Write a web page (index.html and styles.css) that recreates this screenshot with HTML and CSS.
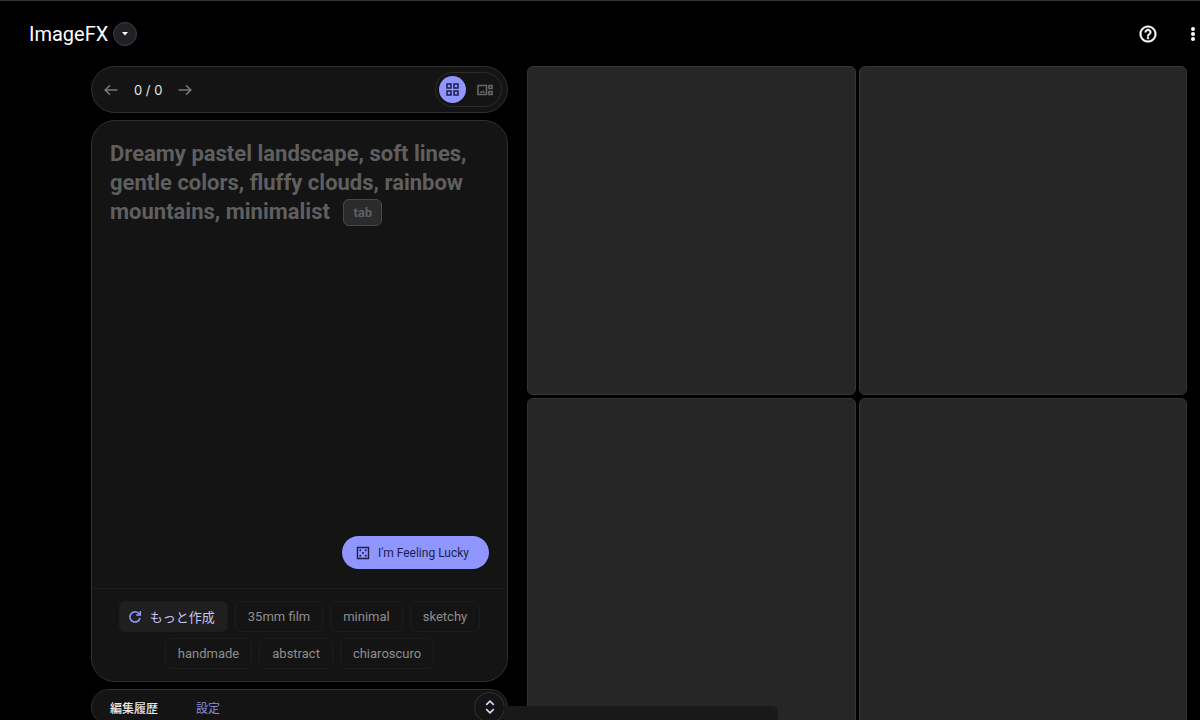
FILE: index.html
```html
<!DOCTYPE html>
<html lang="ja">
<head>
    <meta charset="UTF-8">
    <meta name="viewport" content="width=device-width, initial-scale=1.0">
    <title>ImageFX</title>
    <link rel="stylesheet" href="styles.css">
</head>
<body>
    <!-- Header -->
    <header class="header">
        <h1 class="logo">ImageFX</h1>
        <button type="button" class="tool-menu" aria-label="Switch tool">
            <svg width="8" height="4" viewBox="0 0 8 4"><path d="M1 0h6L4 3.5z" fill="currentColor"/></svg>
        </button>
        <div class="header-actions">
            <button type="button" class="icon-btn" aria-label="Help">
                <svg width="20" height="20" viewBox="0 0 24 24" fill="currentColor"><path d="M11 18h2v-2h-2v2zm1-16C6.480 2 2 6.480 2 12s4.480 10 10 10 10-4.480 10-10S17.520 2 12 2zm0 18c-4.410 0-8-3.590-8-8s3.590-8 8-8 8 3.590 8 8-3.590 8-8 8zm0-14c-2.210 0-4 1.790-4 4h2c0-1.100.9-2 2-2s2 .9 2 2c0 2-3 1.750-3 5h2c0-2.250 3-2.500 3-5 0-2.210-1.790-4-4-4z" stroke="currentColor" stroke-width=".5"/></svg>
            </button>
            <button type="button" class="icon-btn" aria-label="More options">
                <svg width="20" height="20" viewBox="0 0 20 20" fill="currentColor"><circle cx="10" cy="5" r="2"/><circle cx="10" cy="10" r="2"/><circle cx="10" cy="15" r="2"/></svg>
            </button>
        </div>
    </header>

    <main class="workspace">
        <div class="sidebar">
            <!-- History toolbar -->
            <div class="panel toolbar">
                <button type="button" class="icon-btn arrow" aria-label="Previous">
                    <svg width="14" height="12" viewBox="0 0 14 12" fill="none" stroke="currentColor" stroke-width="1.6"><path d="M13.5 6H1.500M6 1.200L1.200 6 6 10.800"/></svg>
                </button>
                <span class="counter">0 / 0</span>
                <button type="button" class="icon-btn arrow" aria-label="Next">
                    <svg width="14" height="12" viewBox="0 0 14 12" fill="none" stroke="currentColor" stroke-width="1.6"><path d="M.5 6h12M8 1.200L12.800 6 8 10.800"/></svg>
                </button>
                <div class="view-switch">
                    <button type="button" class="view-btn active" aria-label="Grid view">
                        <svg width="13" height="13" viewBox="0 0 13 13" fill="none" stroke="currentColor" stroke-width="1.5"><path d="M1 1h4v4H1zM8 1h4v4H8zM1 8h4v4H1zM8 8h4v4H8z"/></svg>
                    </button>
                    <button type="button" class="view-btn" aria-label="Detail view">
                        <svg width="16" height="12" viewBox="0 0 16 12" fill="none" stroke="currentColor" stroke-width="1.6"><path d="M1 1.500h8.500v9H1zM12 1.500h3v3h-3zM12 7.500h3v3h-3z"/><path d="M2.500 8.800l1.500-2 1.200 1.200 1.300-1.700 1.700 2.500z" fill="currentColor" stroke="none"/></svg>
                    </button>
                </div>
            </div>

            <!-- Prompt -->
            <div class="panel prompt-card">
                <div class="prompt-box">
                    <textarea id="prompt" class="prompt-input"></textarea>
                    <label for="prompt" class="prompt-hint">
                        <span>Dreamy pastel landscape, soft lines, gentle colors, fluffy clouds, rainbow mountains, minimalist</span>
                        <kbd>tab</kbd>
                    </label>
                </div>
                <div class="prompt-actions">
                    <button type="button" class="lucky-btn">
                        <svg width="14" height="14" viewBox="0 0 14 14"><path d="M1.500 1.500h11v11h-11z" fill="none" stroke="currentColor" stroke-width="1.4"/><g fill="currentColor"><circle cx="4.300" cy="4.300" r="1"/><circle cx="9.700" cy="4.300" r="1"/><circle cx="7" cy="7" r="1"/><circle cx="4.300" cy="9.700" r="1"/><circle cx="9.700" cy="9.700" r="1"/></g></svg>
                        I'm Feeling Lucky
                    </button>
                </div>
                <div class="chips">
                    <button type="button" class="chip chip-more">
                        <svg width="14" height="14" viewBox="0 0 14 14" fill="none" stroke="currentColor" stroke-width="1.6"><path d="M12 8a5.100 5.100 0 1 1-1.200-4.500L12.300 5"/><path d="M12.300 1v4H8.200"/></svg>
                        もっと作成
                    </button>
                    <button type="button" class="chip">35mm film</button>
                    <button type="button" class="chip">minimal</button>
                    <button type="button" class="chip">sketchy</button>
                    <button type="button" class="chip">handmade</button>
                    <button type="button" class="chip">abstract</button>
                    <button type="button" class="chip">chiaroscuro</button>
                </div>
            </div>

            <!-- Edit history / settings -->
            <div class="panel tabs">
                <a href="#history" class="tab current">編集履歴</a>
                <a href="#settings" class="tab">設定</a>
                <button type="button" class="expand-btn" aria-label="Expand">
                    <svg width="10" height="14" viewBox="0 0 10 14" fill="none" stroke="currentColor" stroke-width="1.6"><path d="M1.200 4.800L5 1.200l3.800 3.600M1.200 9.200L5 12.800l3.800-3.600"/></svg>
                </button>
            </div>
        </div>

        <!-- Generated images -->
        <div class="gallery">
            <div class="tile"></div>
            <div class="tile"></div>
            <div class="tile"></div>
            <div class="tile"></div>
        </div>
    </main>

    <div class="toast"></div>
</body>
</html>
```
FILE: styles.css
```css
/* Basic Reset */
* {
    margin: 0;
    padding: 0;
    box-sizing: border-box;
}

body {
    height: 100vh;
    overflow: hidden;
    background: #000;
    color: #fff;
    font-family: Roboto, "Noto Sans CJK JP", sans-serif;
    font-size: 13px;
}

button {
    border: none;
    background: none;
    color: inherit;
    font: inherit;
    cursor: pointer;
}

svg {
    display: block;
    flex: none;
}

/* Header */
.header {
    display: flex;
    align-items: center;
    height: 66px;
    padding-left: 29px;
    border-top: 1px solid #333;
}

.logo {
    font-size: 20px;
    font-weight: 400;
}

.tool-menu {
    display: grid;
    place-items: center;
    width: 24px;
    height: 24px;
    margin-left: 5px;
    border: 1px solid #3c4043;
    border-radius: 50%;
    background: #202124;
}

.header-actions {
    display: flex;
    gap: 25px;
    margin-left: auto;
    margin-right: -3px;
}

/* Workspace */
.workspace {
    display: grid;
    grid-template-columns: 417fr 660fr;
    gap: 19px;
    padding: 0 13px 0 91px;
}

.sidebar {
    display: flex;
    flex-direction: column;
    gap: 7px;
    height: calc(100vh - 61px);
}

.panel {
    border: 1px solid #303030;
    border-radius: 24px;
    background: #141414;
}

/* History toolbar */
.toolbar {
    display: flex;
    align-items: center;
    gap: 16px;
    height: 47px;
    padding: 0 5px 0 12px;
}

.arrow {
    color: #777;
}

.counter {
    font-family: Inter, sans-serif;
    color: #e3e3e3;
}

.view-switch {
    display: flex;
    align-items: center;
    gap: 5px;
    margin-left: auto;
    padding: 3px;
    border: 1px solid #2c2c2c;
    border-radius: 18px;
}

.view-btn {
    display: grid;
    place-items: center;
    width: 27px;
    height: 27px;
    border-radius: 50%;
    color: #666;
}

.view-btn.active {
    background: #8f96ff;
    color: #1e1e46;
}

/* Prompt */
.prompt-card {
    display: flex;
    flex-direction: column;
    flex: 1;
}

.prompt-box {
    display: grid;
    flex: 1;
    padding: 18px 18px 0;
}

.prompt-input,
.prompt-hint {
    grid-area: 1 / 1;
    font-size: 22px;
    font-weight: 700;
    line-height: 29px;
}

.prompt-input {
    border: none;
    outline: none;
    background: none;
    color: #e3e3e3;
    resize: none;
}

.prompt-hint {
    color: #5f5f5f;
    pointer-events: none;
}

.prompt-hint kbd {
    display: inline-block;
    margin-left: 8px;
    padding: 0 9px;
    border: 1px solid #48494b;
    border-radius: 6px;
    background: #2a2b2d;
    font-family: Roboto, sans-serif;
    font-size: 13px;
    line-height: 25px;
    vertical-align: bottom;
}

.prompt-actions {
    display: flex;
    justify-content: flex-end;
    padding: 0 18px 19px;
}

.lucky-btn {
    display: flex;
    align-items: center;
    gap: 8px;
    height: 33px;
    padding: 0 20px 0 14px;
    border-radius: 17px;
    background: #8f96ff;
    color: #1e1e46;
    font-size: 12px;
}

.chips {
    display: flex;
    flex-wrap: wrap;
    justify-content: center;
    gap: 6px 7px;
    padding: 12px 18px;
    border-top: 1px solid #1c1c1c;
}

.chip {
    display: flex;
    align-items: center;
    height: 31px;
    padding: 0 12px;
    border: 1px solid #1c1c1c;
    border-radius: 6px;
    color: #8e8e8e;
}

.chip-more {
    gap: 8px;
    padding: 0 12px 0 8px;
    background: #1f1f20;
    color: #c9c4f0;
}

.chip-more svg {
    color: #8f96ff;
}

/* Edit history / settings */
.tabs {
    display: flex;
    align-items: center;
    gap: 38px;
    height: 36px;
    padding: 0 2px 0 18px;
    border-radius: 24px;
}

.tab {
    color: #8f8bd8;
    font-size: 12px;
    text-decoration: none;
}

.tab.current {
    color: #e8e8e8;
    font-weight: 500;
}

.expand-btn {
    display: grid;
    place-items: center;
    width: 31px;
    height: 31px;
    margin-left: auto;
    border: 1px solid #333;
    border-radius: 50%;
    color: #dcd8ff;
}

/* Generated images */
.gallery {
    display: grid;
    grid-template-columns: 1fr 1fr;
    gap: 3px;
    align-content: start;
    height: calc(100vh - 66px);
}

.tile {
    aspect-ratio: 1;
    border: 1px solid #353535;
    border-radius: 6px;
    background: #262626;
}

/* Message bar rising from the bottom edge */
.toast {
    position: absolute;
    bottom: 0;
    left: 42%;
    width: 274px;
    height: 14px;
    border-radius: 0 6px 0 0;
    background: #191919;
}
```
